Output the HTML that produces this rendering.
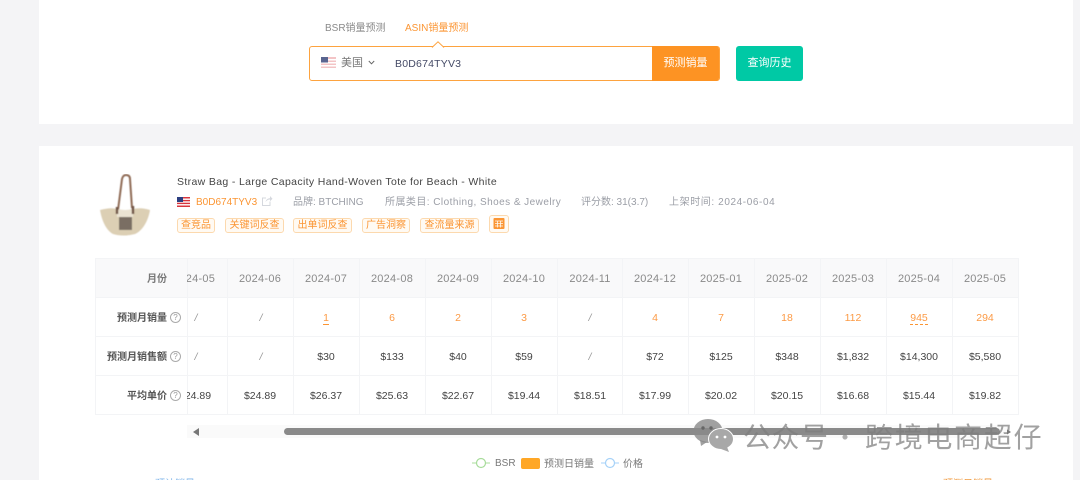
<!DOCTYPE html>
<html><head><meta charset="utf-8">
<style>
html,body{margin:0;padding:0;width:1080px;height:480px;overflow:hidden;background:#f4f4f6;}
body{position:relative;font-family:"Liberation Sans","Noto Sans CJK SC",sans-serif;font-size:10px;line-height:14px;color:#444;}
.a{position:absolute;white-space:nowrap;}
.card{position:absolute;background:#fff;left:39px;width:1034px;}
.tag{position:absolute;top:218px;height:13px;line-height:13px;border:1px solid #fcd9ae;background:#fffaf3;border-radius:3px;color:#fb9533;font-size:10px;text-align:center;}
.h{position:absolute;background:#f3f4f6;}
.c{position:absolute;text-align:center;white-space:nowrap;font-size:10.5px;margin-top:1px;}
.m{color:#8a8a8a;font-size:11px;letter-spacing:.25px;margin-top:1px;}
.o{color:#fc9a45;}
.s{color:#999;}
.lbl{position:absolute;text-align:right;white-space:nowrap;font-weight:bold;color:#555;font-size:10px;margin-top:2px;}
.q{position:absolute;left:170px;width:9px;height:9px;border:1px solid #aaa;border-radius:50%;font-size:8px;line-height:9px;text-align:center;color:#999;}
.g{color:#9b9ea6;font-size:10px;top:196px;}
</style></head><body>
<div class="card" style="top:0;height:124px"></div>
<div class="card" style="top:146px;height:334px"></div>

<div class="a" style="left:325px;top:22px;font-size:10px;color:#8a8a8a">BSR销量预测</div>
<div class="a" style="left:405px;top:22px;font-size:10px;color:#fb9533">ASIN销量预测</div>

<div class="a" style="left:309px;top:46px;width:409px;height:33px;border:1px solid #fda33f;border-radius:3px;background:#fff"></div>
<svg class="a" style="left:431px;top:41px" width="14" height="7"><path d="M1 6.5L7 .8L13 6.5" fill="#fff" stroke="#fda33f"/></svg>
<svg class="a" style="left:321px;top:57px" width="15" height="11"><rect width="15" height="11" fill="#f3c4c6"/><rect y="2" width="15" height="1.5" fill="#fff"/><rect y="5" width="15" height="1.5" fill="#fff"/><rect y="8" width="15" height="1.5" fill="#fff"/><rect width="7" height="5.5" fill="#5a6590"/></svg>
<div class="a" style="left:341px;top:56px;font-size:11px;color:#777">美国</div>
<svg class="a" style="left:368px;top:60px" width="7" height="5"><path d="M.8 1L3.5 3.8L6.2 1" fill="none" stroke="#666"/></svg>
<div class="a" style="left:395px;top:57px;font-size:10.5px;color:#444a66;letter-spacing:.2px">B0D674TYV3</div>
<div class="a" style="left:652px;top:46px;width:67px;height:35px;background:#fd9323;border-radius:0 3px 3px 0;color:#fff;font-size:11px;line-height:34px;text-align:center">预测销量</div>
<div class="a" style="left:736px;top:46px;width:67px;height:35px;background:#00c9a5;border-radius:3px;color:#fff;font-size:11px;line-height:34px;text-align:center">查询历史</div>

<svg class="a" style="left:97px;top:174px" width="56" height="64" viewBox="0 0 56 64">
<g filter="url(#b)">
<path d="M21 36L25 5Q26 1 29 1Q33 1 33 5L35 34" fill="none" stroke="#8f6b55" stroke-width="2"/>
<path d="M3 36Q14 33 20 35Q28 37 36 35Q44 33 53 36C51 48 45 57 38 60C30 62 22 62 16 60C9 56 5 47 3 36Z" fill="#dccfb4"/>
<rect x="20" y="36" width="16" height="7" fill="#ebe3d3"/>
<rect x="22" y="43" width="13" height="13" fill="#7a6e64"/>
<path d="M20 33V40M36 32V40" stroke="#6e5344" stroke-width="2.4"/>
</g>
<defs><filter id="b"><feGaussianBlur stdDeviation=".5"/></filter></defs>
</svg>

<div class="a" style="left:177px;top:175px;font-size:10.5px;color:#444;letter-spacing:.35px">Straw Bag - Large Capacity Hand-Woven Tote for Beach - White</div>

<svg class="a" style="left:177px;top:197px" width="13" height="10"><rect width="13" height="10" fill="#d8353d"/><rect y="1.5" width="13" height="1.4" fill="#fff"/><rect y="4.3" width="13" height="1.4" fill="#fff"/><rect y="7.1" width="13" height="1.4" fill="#fff"/><rect width="6" height="5" fill="#2c3f80"/></svg>
<div class="a" style="left:196px;top:196px;font-size:10px;color:#fb9533">B0D674TYV3</div>
<svg class="a" style="left:261px;top:195px" width="12" height="12"><path d="M9 6.5V10.5H1.5V3H5" fill="none" stroke="#d5d8de"/><path d="M4.5 7C5 4.5 7 3.2 9 3.2V1L11.5 3.7L9 6.2V4.5C7 4.5 5.5 5.5 4.5 7Z" fill="#d5d8de"/></svg>
<div class="a g" style="left:293px">品牌: BTCHING</div>
<div class="a g" style="left:385px;letter-spacing:.45px">所属类目: Clothing, Shoes &amp; Jewelry</div>
<div class="a g" style="left:581px">评分数: 31(3.7)</div>
<div class="a g" style="left:669px;letter-spacing:.6px">上架时间: 2024-06-04</div>

<div class="tag" style="left:177px;width:36px">查竞品</div>
<div class="tag" style="left:225px;width:57px">关键词反查</div>
<div class="tag" style="left:293px;width:57px">出单词反查</div>
<div class="tag" style="left:362px;width:46px">广告洞察</div>
<div class="tag" style="left:420px;width:57px">查流量来源</div>
<div class="tag" style="left:489px;top:215px;width:18px;height:16px"></div>
<svg class="a" style="left:493px;top:218px" width="12" height="11"><rect x=".5" y="0" width="11" height="11" rx="1" fill="#fb9533"/><path d="M2 3H10M2 5.5H10M2 8H10M4.5 3V9.5M7.5 3V9.5" stroke="#fff8ef" stroke-width=".8"/></svg>

<!-- table -->
<div class="a" style="left:95px;top:258px;width:923px;height:39px;background:#f9f9fa"></div>
<div class="h" style="left:95px;top:258px;width:923px;height:1px"></div>
<div class="h" style="left:95px;top:297px;width:923px;height:1px"></div>
<div class="h" style="left:95px;top:336px;width:923px;height:1px"></div>
<div class="h" style="left:95px;top:375px;width:923px;height:1px"></div>
<div class="h" style="left:95px;top:414px;width:923px;height:1px"></div>
<div class="h" style="left:95px;top:258px;width:1px;height:157px"></div>
<div class="h" style="left:187px;top:258px;width:1px;height:157px"></div>
<div class="h" style="left:227px;top:258px;width:1px;height:157px"></div>
<div class="h" style="left:293px;top:258px;width:1px;height:157px"></div>
<div class="h" style="left:359px;top:258px;width:1px;height:157px"></div>
<div class="h" style="left:425px;top:258px;width:1px;height:157px"></div>
<div class="h" style="left:491px;top:258px;width:1px;height:157px"></div>
<div class="h" style="left:557px;top:258px;width:1px;height:157px"></div>
<div class="h" style="left:622px;top:258px;width:1px;height:157px"></div>
<div class="h" style="left:688px;top:258px;width:1px;height:157px"></div>
<div class="h" style="left:754px;top:258px;width:1px;height:157px"></div>
<div class="h" style="left:820px;top:258px;width:1px;height:157px"></div>
<div class="h" style="left:886px;top:258px;width:1px;height:157px"></div>
<div class="h" style="left:952px;top:258px;width:1px;height:157px"></div>
<div class="h" style="left:1018px;top:258px;width:1px;height:157px"></div>

<div class="lbl" style="left:96px;width:71px;top:271px;color:#777">月份</div>
<div class="lbl" style="left:96px;width:71px;top:310px">预测月销量</div>
<div class="lbl" style="left:96px;width:71px;top:349px">预测月销售额</div>
<div class="lbl" style="left:96px;width:71px;top:388px">平均单价</div>
<div class="q" style="top:312px">?</div>
<div class="q" style="top:351px">?</div>
<div class="q" style="top:390px">?</div>

<div class="a m" style="left:187px;top:271px;width:40px;overflow:hidden"><span style="display:inline-block;margin-left:-14px">2024-05</span></div>
<div class="c m" style="left:227px;width:66px;top:271px">2024-06</div>
<div class="c m" style="left:293px;width:66px;top:271px">2024-07</div>
<div class="c m" style="left:359px;width:66px;top:271px">2024-08</div>
<div class="c m" style="left:425px;width:66px;top:271px">2024-09</div>
<div class="c m" style="left:491px;width:66px;top:271px">2024-10</div>
<div class="c m" style="left:557px;width:66px;top:271px">2024-11</div>
<div class="c m" style="left:622px;width:66px;top:271px">2024-12</div>
<div class="c m" style="left:688px;width:66px;top:271px">2025-01</div>
<div class="c m" style="left:754px;width:66px;top:271px">2025-02</div>
<div class="c m" style="left:820px;width:66px;top:271px">2025-03</div>
<div class="c m" style="left:886px;width:66px;top:271px">2025-04</div>
<div class="c m" style="left:952px;width:66px;top:271px">2025-05</div>

<div class="c s" style="left:191px;width:10px;top:310px"><i>/</i></div>
<div class="c s" style="left:228px;width:66px;top:310px"><i>/</i></div>
<div class="c o" style="left:293px;width:66px;top:310px"><span style="border-bottom:1px solid #fb9533">1</span></div>
<div class="c o" style="left:359px;width:66px;top:310px">6</div>
<div class="c o" style="left:425px;width:66px;top:310px">2</div>
<div class="c o" style="left:491px;width:66px;top:310px">3</div>
<div class="c s" style="left:557px;width:66px;top:310px"><i>/</i></div>
<div class="c o" style="left:622px;width:66px;top:310px">4</div>
<div class="c o" style="left:688px;width:66px;top:310px">7</div>
<div class="c o" style="left:754px;width:66px;top:310px">18</div>
<div class="c o" style="left:820px;width:66px;top:310px">112</div>
<div class="c o" style="left:886px;width:66px;top:310px"><span style="border-bottom:1px dashed #fb9533">945</span></div>
<div class="c o" style="left:952px;width:66px;top:310px">294</div>

<div class="c s" style="left:191px;width:10px;top:349px"><i>/</i></div>
<div class="c s" style="left:228px;width:66px;top:349px"><i>/</i></div>
<div class="c" style="left:293px;width:66px;top:349px">$30</div>
<div class="c" style="left:359px;width:66px;top:349px">$133</div>
<div class="c" style="left:425px;width:66px;top:349px">$40</div>
<div class="c" style="left:491px;width:66px;top:349px">$59</div>
<div class="c s" style="left:557px;width:66px;top:349px"><i>/</i></div>
<div class="c" style="left:622px;width:66px;top:349px">$72</div>
<div class="c" style="left:688px;width:66px;top:349px">$125</div>
<div class="c" style="left:754px;width:66px;top:349px">$348</div>
<div class="c" style="left:820px;width:66px;top:349px">$1,832</div>
<div class="c" style="left:886px;width:66px;top:349px">$14,300</div>
<div class="c" style="left:952px;width:66px;top:349px">$5,580</div>

<div class="a" style="left:187px;top:389px;width:40px;overflow:hidden;font-size:10.5px"><span style="display:inline-block;margin-left:-8px">$24.89</span></div>
<div class="c" style="left:227px;width:66px;top:388px">$24.89</div>
<div class="c" style="left:293px;width:66px;top:388px">$26.37</div>
<div class="c" style="left:359px;width:66px;top:388px">$25.63</div>
<div class="c" style="left:425px;width:66px;top:388px">$22.67</div>
<div class="c" style="left:491px;width:66px;top:388px">$19.44</div>
<div class="c" style="left:557px;width:66px;top:388px">$18.51</div>
<div class="c" style="left:622px;width:66px;top:388px">$17.99</div>
<div class="c" style="left:688px;width:66px;top:388px">$20.02</div>
<div class="c" style="left:754px;width:66px;top:388px">$20.15</div>
<div class="c" style="left:820px;width:66px;top:388px">$16.68</div>
<div class="c" style="left:886px;width:66px;top:388px">$15.44</div>
<div class="c" style="left:952px;width:66px;top:388px">$19.82</div>

<!-- scrollbar -->
<div class="a" style="left:187px;top:425px;width:820px;height:13px;background:#fafafa"></div>
<svg class="a" style="left:192px;top:427px" width="8" height="10"><path d="M1 5L7 1V9Z" fill="#777"/></svg>
<div class="a" style="left:284px;top:428px;width:716px;height:7px;border-radius:4px;background:#8a8a8a"></div>
<svg class="a" style="left:1006px;top:429px" width="6" height="6"><path d="M5 3L1 .5V5.5Z" fill="#777"/></svg>

<!-- legend -->
<svg class="a" style="left:471px;top:456px" width="20" height="14"><path d="M1 7H19" stroke="#a8dc9b"/><circle cx="10" cy="7" r="4.5" fill="#fff" stroke="#a8dc9b" stroke-width="1.2"/></svg>
<div class="a" style="left:495px;top:457px;font-size:10px;color:#777">BSR</div>
<div class="a" style="left:521px;top:458px;width:19px;height:11px;border-radius:2px;background:#ffa726"></div>
<div class="a" style="left:544px;top:458px;font-size:10px;color:#777">预测日销量</div>
<svg class="a" style="left:600px;top:456px" width="20" height="14"><path d="M1 7H19" stroke="#a6d2f8"/><circle cx="10" cy="7" r="4.5" fill="#fff" stroke="#a6d2f8" stroke-width="1.2"/></svg>
<div class="a" style="left:623px;top:458px;font-size:10px;color:#777">价格</div>

<!-- clipped bottom text -->
<div class="a" style="left:155px;top:478px;font-size:10px;color:#7fb5ea">预计销量</div>
<div class="a" style="left:943px;top:478px;font-size:10px;color:#f09a3e">预测日销量</div>

<!-- watermark -->
<svg class="a" style="left:693px;top:418px" width="41" height="35" viewBox="0 0 41 35">
<ellipse cx="15" cy="13" rx="14.5" ry="12" fill="#8a8a8a" fill-opacity=".8"/><path d="M7 22L8 28L14 24Z" fill="#8a8a8a" fill-opacity=".8"/>
<ellipse cx="28" cy="21" rx="12.5" ry="10.5" fill="#a8a8a8" stroke="#fff"/><path d="M34 29L36 34L28 31Z" fill="#a8a8a8"/>
<circle cx="10" cy="10" r="1.7" fill="#666"/><circle cx="18" cy="10" r="1.7" fill="#666"/>
<circle cx="24" cy="19" r="1.4" fill="#fff"/><circle cx="32" cy="19" r="1.4" fill="#fff"/>
</svg>
<div class="a" style="left:743px;top:418px;font-size:28px;line-height:36px;color:rgba(125,125,125,.72);letter-spacing:.5px;font-family:'Noto Sans CJK SC','Liberation Sans',sans-serif">公众号</div>
<div class="a" style="left:833px;top:418px;font-size:24px;line-height:36px;color:rgba(125,125,125,.6);font-family:'Noto Sans CJK SC','Liberation Sans',sans-serif">·</div>
<div class="a" style="left:865px;top:418px;font-size:28px;line-height:36px;color:rgba(125,125,125,.72);letter-spacing:1.7px;font-family:'Noto Sans CJK SC','Liberation Sans',sans-serif">跨境电商超仔</div>
</body></html>
